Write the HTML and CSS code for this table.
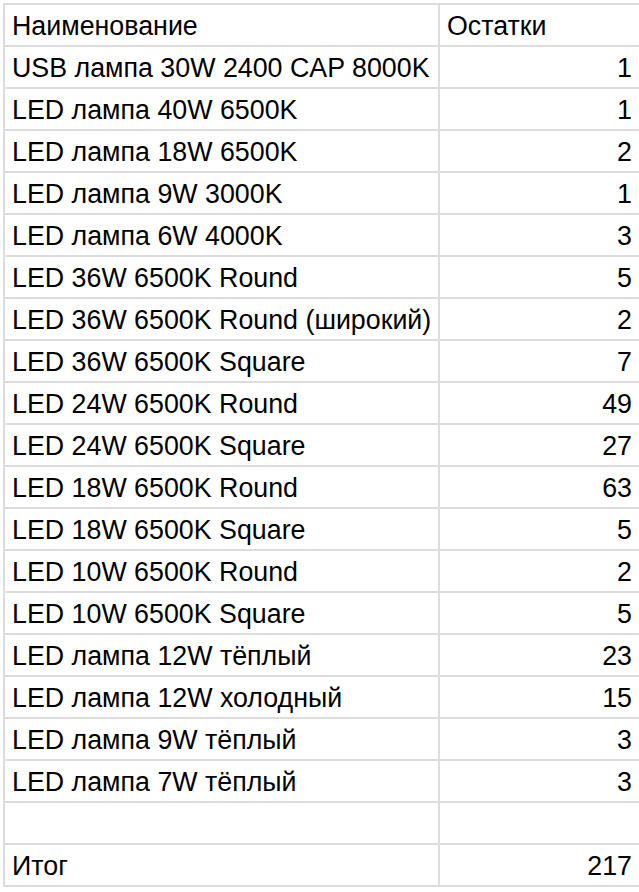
FILE: index.html
```html
<!DOCTYPE html>
<html lang="ru">
<head>
<meta charset="utf-8">
<title>Остатки</title>
<link rel="stylesheet" href="styles.css">
</head>
<body>
<div class="sheet">
  <div class="cell">Наименование</div><div class="cell">Остатки</div>
  <div class="cell">USB лампа 30W 2400 CAP 8000K</div><div class="cell num">1</div>
  <div class="cell">LED лампа 40W 6500K</div><div class="cell num">1</div>
  <div class="cell">LED лампа 18W 6500K</div><div class="cell num">2</div>
  <div class="cell">LED лампа 9W 3000K</div><div class="cell num">1</div>
  <div class="cell">LED лампа 6W 4000K</div><div class="cell num">3</div>
  <div class="cell">LED 36W 6500K Round</div><div class="cell num">5</div>
  <div class="cell">LED 36W 6500K Round (широкий)</div><div class="cell num">2</div>
  <div class="cell">LED 36W 6500K Square</div><div class="cell num">7</div>
  <div class="cell">LED 24W 6500K Round</div><div class="cell num">49</div>
  <div class="cell">LED 24W 6500K Square</div><div class="cell num">27</div>
  <div class="cell">LED 18W 6500K Round</div><div class="cell num">63</div>
  <div class="cell">LED 18W 6500K Square</div><div class="cell num">5</div>
  <div class="cell">LED 10W 6500K Round</div><div class="cell num">2</div>
  <div class="cell">LED 10W 6500K Square</div><div class="cell num">5</div>
  <div class="cell">LED лампа 12W тёплый</div><div class="cell num">23</div>
  <div class="cell">LED лампа 12W холодный</div><div class="cell num">15</div>
  <div class="cell">LED лампа 9W тёплый</div><div class="cell num">3</div>
  <div class="cell">LED лампа 7W тёплый</div><div class="cell num">3</div>
  <div class="cell"></div><div class="cell num"></div>
  <div class="cell">Итог</div><div class="cell num">217</div>
</div>
</body>
</html>
```
FILE: styles.css
```css
html, body {
  margin: 0;
  padding: 0;
  background: #ffffff;
  overflow: hidden;
}

.sheet {
  display: grid;
  grid-template-columns: 433px 199px;
  grid-auto-rows: 40px;
  gap: 2px;
  padding: 2px 0 2px 2px;
  margin: 3px 0 0 3px;
  width: 636px;
  box-sizing: border-box;
  background: #dcdcdc;
  font-family: "Liberation Sans", Arial, Helvetica, sans-serif;
  font-size: 26.8px;
  color: #000000;
}

.cell {
  background: #ffffff;
  box-sizing: border-box;
  padding: 3px 7px 0 7px;
  line-height: 37px;
  white-space: nowrap;
  overflow: hidden;
}

.num {
  text-align: right;
}
```
